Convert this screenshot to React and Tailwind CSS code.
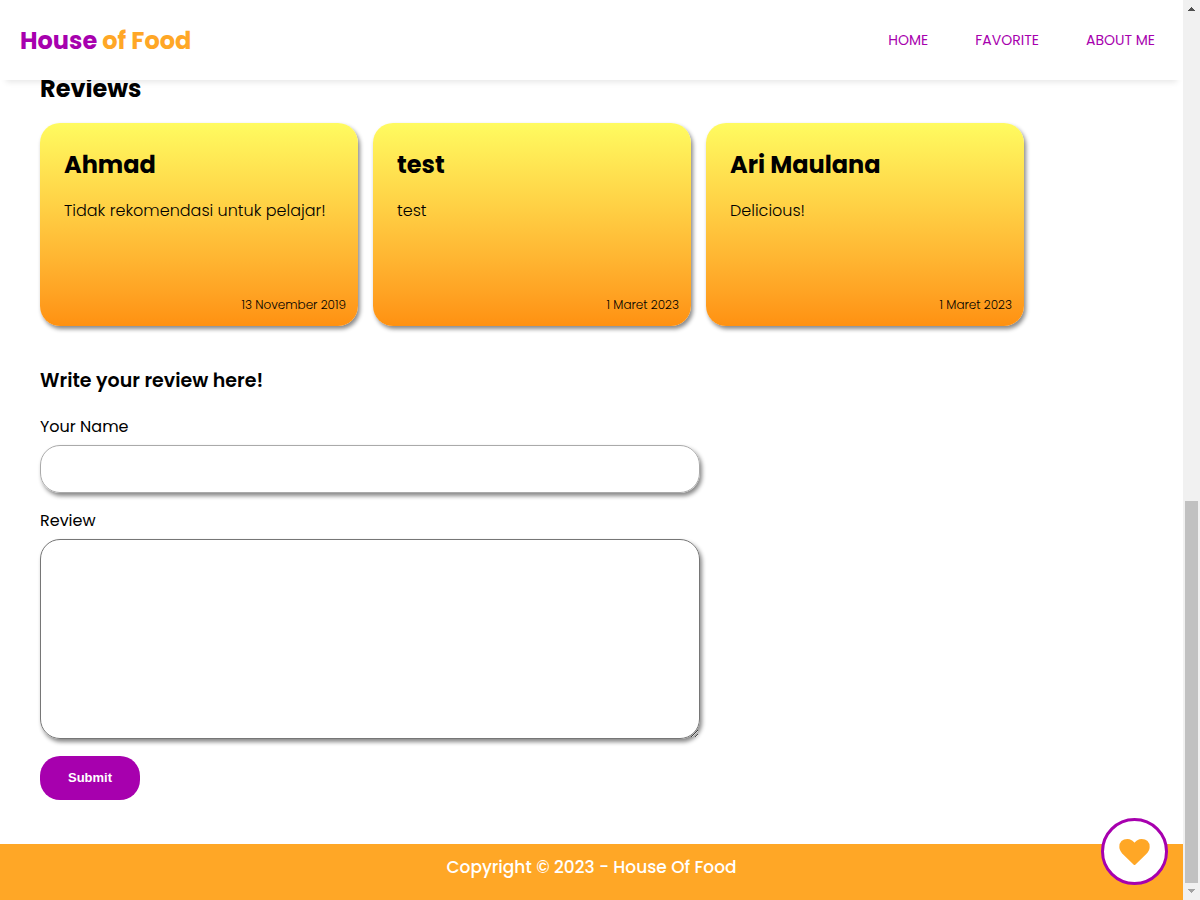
import React from "react";

const links = ["HOME", "FAVORITE", "ABOUT ME"];

const reviews = [
  { name: "Ahmad", text: "Tidak rekomendasi untuk pelajar!", date: "13 November 2019" },
  { name: "test", text: "test", date: "1 Maret 2023" },
  { name: "Ari Maulana", text: "Delicious!", date: "1 Maret 2023" },
];

function Header() {
  return (
    <header className="sticky top-0 z-10 flex h-20 items-center justify-between bg-white pr-7 pl-5 shadow-[0_8px_6px_-6px_rgb(0_0_0/0.1)]">
      <a href="#home" className="pt-0.5 text-2xl font-bold text-[#a700ae]">
        House <span className="text-[#ffa726]">of Food</span>
      </a>
      <nav className="flex gap-[47px]">
        {links.map((label) => (
          <a key={label} href="#nav" className="text-sm text-[#a700ae]">
            {label}
          </a>
        ))}
      </nav>
    </header>
  );
}

function ReviewCard({ name, text, date }) {
  return (
    <article className="flex h-[203px] w-[318px] flex-col rounded-[20px] bg-linear-to-b from-[#fffb60] to-[#ff9110] px-6 pt-6 pb-3 shadow-[2px_3px_4px_#888]">
      <h3 className="text-2xl leading-9 font-bold">{name}</h3>
      <p className="mt-4 text-base font-light whitespace-nowrap">{text}</p>
      <p className="-mr-3 mt-auto text-right text-xs leading-[18px] font-light">{date}</p>
    </article>
  );
}

function ReviewForm() {
  return (
    <form className="mt-[37px] flex max-w-[660px] flex-col" onSubmit={(e) => e.preventDefault()}>
      <h3 className="text-[19px] leading-9 font-semibold">Write your review here!</h3>
      <label htmlFor="name" className="mt-4 leading-6">
        Your Name
      </label>
      <input
        id="name"
        type="text"
        className="mt-1.5 h-12 rounded-[20px] border border-[#aaa] px-4 shadow-[2px_3px_4px_#888] outline-none"
      />
      <label htmlFor="review" className="mt-4 leading-6">
        Review
      </label>
      <textarea
        id="review"
        className="mt-1.5 h-[200px] rounded-[20px] border border-[#767676] p-4 shadow-[2px_3px_4px_#888] outline-none"
      />
      <button
        type="submit"
        className="mt-[17px] h-11 w-[100px] rounded-[20px] bg-[#a700ae] font-['Liberation_Sans',sans-serif] text-[13px] font-bold text-white"
      >
        Submit
      </button>
    </form>
  );
}

function FavoriteButton() {
  return (
    <button
      type="button"
      aria-label="Favorite"
      className="fixed right-8 bottom-[15px] z-20 flex size-[67px] items-center justify-center rounded-full border-[3px] border-[#a700ae] bg-white"
    >
      <svg viewBox="0 128 1792 1536" className="h-[26px] w-[31px] fill-[#ffa726]" aria-hidden="true">
        <path d="M896 1664q-26 0-44-18l-624-602q-10-8-27.5-26t-55.5-65.5-68-97.5-53.5-121-23.5-138q0-220 127-344t351-124q62 0 126.5 21.5t120 58 95.5 68.5 76 68q36-36 76-68t95.5-68.5 120-58 126.500-21.500q224 0 351 124t127 344q0 221-229 450l-623 600q-18 18-44 18z" />
      </svg>
    </button>
  );
}

function ScrollTrack() {
  return (
    <div
      aria-hidden="true"
      className="sticky top-0 flex h-screen w-[17px] shrink-0 flex-col items-center bg-[#f1f1f1] py-[7px]"
    >
      <svg viewBox="0 0 7 4" className="h-1 w-[7px] fill-[#505050]">
        <path d="M3 0h1v1h1v1h1v1h1v1H0V3h1V2h1V1h1z" />
      </svg>
      <div className="mt-auto mb-1.5 h-[382px] w-[13px] bg-[#c1c1c1]" />
      <svg viewBox="0 0 7 4" className="h-1 w-[7px] fill-[#a3a3a3]">
        <path d="M0 0h7v1H6v1H5v1H4v1H3V3H2V2H1V1H0z" />
      </svg>
    </div>
  );
}

export default function App() {
  return (
    <div className="flex bg-white font-[Poppins,Inter,sans-serif] text-black">
      <div className="flex min-h-screen min-w-0 flex-1 flex-col">
        <Header />
        <main className="-mt-[9px] flex-1 px-10 pb-11">
          <h2 className="text-2xl leading-9 font-bold">Reviews</h2>
          <section className="mt-4 flex flex-wrap gap-[15px]">
            {reviews.map((r) => (
              <ReviewCard key={r.name} {...r} />
            ))}
          </section>
          <ReviewForm />
        </main>
        <footer className="h-14 bg-[#ffa726] pt-[11px] text-center text-[17px] leading-6 font-medium text-white">
          Copyright © 2023 - House Of Food
        </footer>
      </div>
      <ScrollTrack />
      <FavoriteButton />
    </div>
  );
}
